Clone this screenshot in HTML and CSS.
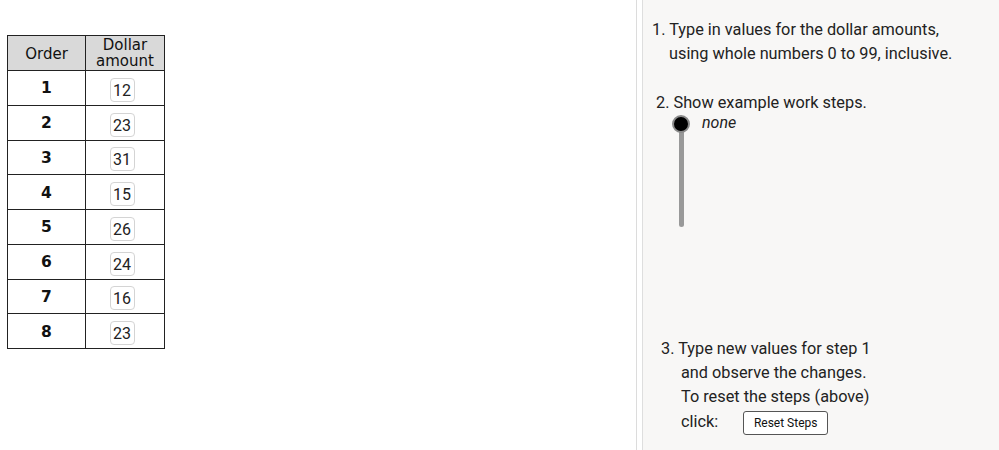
FILE: index.html
```html
<!DOCTYPE html>
<html>
<head>
<meta charset="utf-8">
<link rel="stylesheet" href="styles.css">
</head>
<body>
<div class="page">
  <div class="left">
    <div class="grid">
      <div class="hcell">Order</div>
      <div class="hcell two"><span class="hl">Dollar</span><span class="hl">amount</span></div>
      <div class="num">1</div><div class="val"><span class="box">12</span></div>
      <div class="num">2</div><div class="val"><span class="box">23</span></div>
      <div class="num">3</div><div class="val"><span class="box">31</span></div>
      <div class="num">4</div><div class="val"><span class="box">15</span></div>
      <div class="num">5</div><div class="val"><span class="box">26</span></div>
      <div class="num">6</div><div class="val"><span class="box">24</span></div>
      <div class="num">7</div><div class="val"><span class="box">16</span></div>
      <div class="num">8</div><div class="val"><span class="box">23</span></div>
    </div>
  </div>
  <div class="divider"></div>
  <div class="panel">
    <div class="step1">
      <div>1. Type in values for the dollar amounts,</div>
      <div class="ind">using whole numbers 0 to 99, inclusive.</div>
    </div>
    <div class="step2">2. Show example work steps.</div>
    <div class="slider">
      <div class="track"><span class="knob"></span></div>
      <div class="label">none</div>
    </div>
    <div class="step3">
      <div>3. Type new values for step 1</div>
      <div class="ind3">and observe the changes.</div>
      <div class="ind3">To reset the steps (above)</div>
      <div class="ind3 clickrow"><span>click:</span><button class="btn">Reset Steps</button></div>
    </div>
  </div>
</div>
</body>
</html>
```
FILE: styles.css
```css
html, body { margin: 0; padding: 0; background: #fff; }
.page { display: flex; width: 999px; height: 450px; overflow: hidden; }
.left { width: 636px; flex: none; padding: 35px 0 0 7px; box-sizing: border-box; }
.grid {
  display: grid;
  width: 158px;
  grid-template-columns: 78px 79px;
  grid-template-rows: 35px repeat(8, 34.75px);
  border-top: 1px solid #222;
  border-left: 1px solid #222;
  box-sizing: border-box;
}
.grid > div {
  border-right: 1px solid #222;
  border-bottom: 1px solid #222;
  display: flex;
  align-items: center;
  justify-content: center;
  box-sizing: border-box;
}
.hcell {
  background: #d9d9d9;
  font-family: "DejaVu Sans", sans-serif;
  font-size: 15px;
  color: #111;
  text-align: center;
  padding-top: 2px;
}
.hcell.two { flex-direction: column; padding-top: 0; gap: 0; }
.hl { display: block; height: 16px; line-height: 16px; }
.num {
  font-family: "DejaVu Sans", sans-serif;
  font-weight: bold;
  font-size: 15.5px;
  color: #111;
  padding-top: 1px;
}
.val { justify-content: flex-start !important; padding-left: 24px; }
.box {
  display: inline-block;
  width: 25px;
  height: 24px;
  box-sizing: border-box;
  border: 1px solid #d4d4d4;
  border-radius: 4px;
  font-family: Roboto, sans-serif;
  font-size: 16px;
  line-height: 24px;
  padding-left: 2px;
  color: #222;
  margin-top: 4px;
  background: #fff;
}
.divider {
  width: 5px;
  flex: none;
  border-left: 1px solid #dcdcdc;
  border-right: 1px solid #dedede;
  background: #fff;
}
.panel {
  flex: 1;
  background: #f8f7f6;
  font-family: Roboto, sans-serif;
  font-size: 16.3px;
  color: #222;
  line-height: 24px;
  padding-top: 18px;
}
.step1 { padding-left: 9px; }
.ind { padding-left: 17px; }
.step2 { padding-left: 13px; margin-top: 25px; }
.slider { display: flex; align-items: flex-start; padding-left: 36px; height: 110px; }
.track {
  position: relative;
  width: 5px;
  height: 105px;
  margin-top: 7px;
  background: #999;
  border-radius: 3px;
}
.knob {
  position: absolute;
  left: -7px;
  top: -7px;
  width: 14px;
  height: 14px;
  border-radius: 50%;
  background: #000;
  border: 2px solid #8a8a8a;
  box-sizing: content-box;
}
.label { font-style: italic; font-size: 16px; margin-left: 18px; line-height: 18px; margin-top: -1px; }
.step3 { padding-left: 18px; margin-top: 112px; }
.ind3 { padding-left: 20px; }
.clickrow { display: flex; align-items: center; }
.btn {
  margin-left: 25px;
  font-family: Roboto, sans-serif;
  font-size: 12px;
  color: #111;
  background: #fff;
  border: 1px solid #555;
  border-radius: 3px;
  height: 24px;
  width: 85px;
  padding: 0;
  margin-top: 2px;
}
```
